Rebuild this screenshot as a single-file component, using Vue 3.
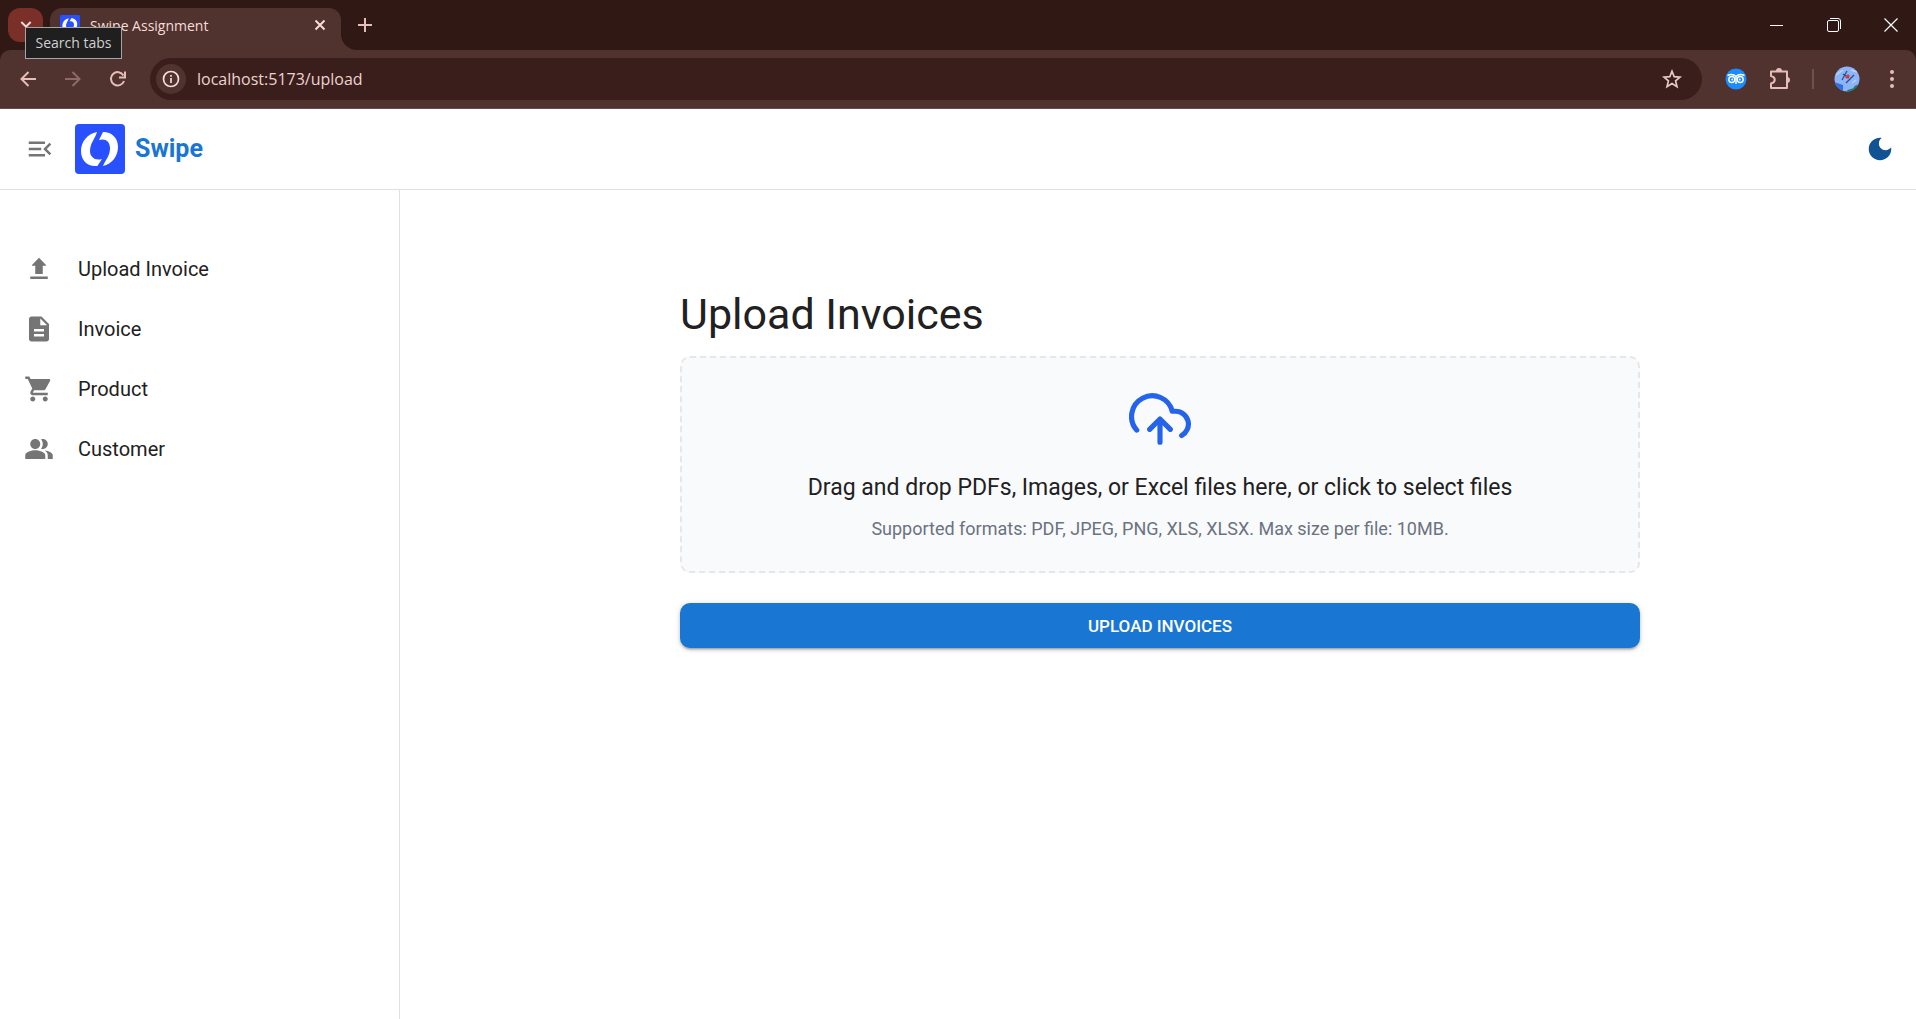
<script setup>
import { ref } from 'vue'

const address = ref('localhost:5173/upload')

const navItems = [
  { label: 'Upload Invoice', path: 'M5 20h14v-2H5zM12 3 6.4 8.8v.6H9V16h6V9.400h2.600v-.6z' },
  { label: 'Invoice', path: 'M14 2H6c-1.100 0-2 .9-2 2v16c0 1.100.9 2 2 2h12c1.100 0 2-.9 2-2V8zm2 16H8v-2h8zm0-4H8v-2h8zm-3-5V3.500L18.500 9z' },
  { label: 'Product', path: 'M7 18c-1.100 0-1.990.9-1.990 2S5.900 22 7 22s2-.9 2-2-.9-2-2-2M1 2v2h2l3.600 7.590-1.350 2.450c-.16.28-.25.61-.25.96 0 1.100.9 2 2 2h12v-2H7.420c-.14 0-.25-.11-.25-.25l.03-.12.9-1.630h7.450c.75 0 1.410-.41 1.750-1.030l3.580-6.490c.08-.14.12-.31.12-.48 0-.55-.45-1-1-1H5.210l-.94-2zm16 16c-1.100 0-1.990.9-1.990 2s.89 2 1.990 2 2-.9 2-2-.9-2-2-2' },
  { label: 'Customer', path: 'M16.670 13.130C18.040 14.060 19 15.320 19 17v3h4v-3c0-2.180-3.570-3.470-6.330-3.870M15 12c2.210 0 4-1.790 4-4s-1.790-4-4-4c-.47 0-.91.1-1.330.24C14.500 5.270 15 6.580 15 8s-.5 2.730-1.330 3.760c.42.14.86.24 1.330.24M9 12c2.210 0 4-1.790 4-4s-1.790-4-4-4-4 1.790-4 4 1.790 4 4 4m0 1c-2.670 0-8 1.340-8 4v3h16v-3c0-2.660-5.330-4-8-4' },
]
</script>

<template>
  <div class="window">
    <header class="chrome">
      <div class="tabstrip">
        <div class="search-wrap">
          <button class="tab-search" aria-label="Search tabs">
            <svg width="12" height="12" viewBox="0 0 12 12"><path d="M1.300 3l4.700 4.700L10.700 3" fill="none" stroke="#f6dcd8" stroke-width="2" /></svg>
          </button>
          <span class="tooltip" role="tooltip">Search tabs</span>
        </div>
        <div class="tab">
          <svg class="favicon" width="20" height="20" viewBox="0 0 50 50">
            <rect width="50" height="50" rx="3" fill="#2950ff" />
            <path fill="#fff" d="M22 8C12 10 6 18 6 27c0 9 6 15 14 15 2 0 3 0 3-1l4-6c-7 2-12-2-12-8 0-8 5-12 7-19zM28 8c9 0 15 6 15 15 0 9-6 17-15 19 3-7 7-10 7-18 0-7-5-10-11-8z" />
          </svg>
          <span class="tab-title">Swipe Assignment</span>
          <button class="plain" aria-label="Close tab">
            <svg width="12" height="12" viewBox="0 0 12 12"><path d="M1.500 1.500l9 9M10.500 1.500l-9 9" stroke="#f6dcd8" stroke-width="2" /></svg>
          </button>
          <svg class="tab-foot" width="16" height="16" viewBox="0 0 16 16"><path d="M0 0v16h16A16 16 0 0 1 0 0z" fill="#50322f" /></svg>
        </div>
        <button class="plain new-tab" aria-label="New tab">
          <svg width="14" height="14" viewBox="0 0 14 14"><path d="M7 0v14M0 7h14" stroke="#e7bdb7" stroke-width="2" /></svg>
        </button>
        <div class="window-controls">
          <button class="plain" aria-label="Minimize"><svg width="14" height="14" viewBox="0 0 14 14"><path d="M0 7.500h13" stroke="#fff" /></svg></button>
          <button class="plain" aria-label="Restore">
            <svg width="14" height="14" viewBox="0 0 14 14" fill="none" stroke="#fff"><rect x=".5" y="2.500" width="11" height="11" rx="1.500" /><path d="M3 .5h8a2.500 2.500 0 0 1 2.500 2.500v8" /></svg>
          </button>
          <button class="plain" aria-label="Close"><svg width="14" height="14" viewBox="0 0 14 14"><path d="M.5.5l13 13M13.500.5l-13 13" stroke="#fff" stroke-width="1.200" /></svg></button>
        </div>
      </div>
      <div class="toolbar">
        <div class="history">
          <button class="plain" aria-label="Back"><svg width="16" height="16" viewBox="0 0 16 16"><path d="M16 8H2M8.500 1 1.500 8l7 7" fill="none" stroke="#e7bdb7" stroke-width="2" /></svg></button>
          <button class="plain" aria-label="Forward"><svg width="16" height="16" viewBox="0 0 16 16"><path d="M0 8h14M7.500 1l7 7-7 7" fill="none" stroke="#8d6a66" stroke-width="2" /></svg></button>
          <button class="plain" aria-label="Reload"><svg width="16" height="16" viewBox="0 0 16 16"><path d="M14 10A6.700 6.700 0 1 1 13.500 4.500M15 .5V6.500H9" fill="none" stroke="#e7bdb7" stroke-width="2" /></svg></button>
        </div>
        <div class="omnibox">
          <button class="site-info" aria-label="Site information">
            <svg width="18" height="18" viewBox="0 0 18 18"><circle cx="9" cy="9" r="7.500" fill="none" stroke="#f6dcd8" stroke-width="1.700" /><path d="M9 8v5M9 5v1.700" stroke="#f6dcd8" stroke-width="1.700" /></svg>
          </button>
          <input v-model="address" class="address" type="text" aria-label="Address" />
          <button class="plain" aria-label="Bookmark">
            <svg width="20" height="20" viewBox="0 0 20 20"><path d="M10 2.200l2.200 5.500 5.900.4-4.500 3.800 1.400 5.700-5-3.100-5 3.100 1.400-5.700L1.900 8.100l5.900-.4z" fill="none" stroke="#e6ccc8" stroke-width="1.700" /></svg>
          </button>
        </div>
        <div class="extensions">
          <button class="plain extension" aria-label="Owl extension">
            <svg width="22" height="22" viewBox="0 0 22 22">
              <circle cx="11" cy="11" r="10.500" fill="#1a8cff" />
              <g fill="none" stroke="#fff" stroke-width="1.400"><circle cx="6.800" cy="11.500" r="3" /><circle cx="15.200" cy="11.500" r="3" /><path d="M2.500 7.500c3.500-1.500 6.500-1 8.500 1 2-2 5-2.500 8.500-1M11 8.500v7.500" /></g>
              <circle cx="7.200" cy="11.500" r="1" fill="#fff" /><circle cx="14.800" cy="11.500" r="1" fill="#fff" />
            </svg>
          </button>
          <button class="plain extension" aria-label="Extensions">
            <svg width="22" height="22" viewBox="0 0 22 22"><path d="M2 3.500h16v16.500H2v-4.500c5-1 5-6.500 0-7.500z" fill="none" stroke="#e7bdb7" stroke-width="2" stroke-linejoin="round" /><path d="M7 3a3 3 0 0 1 6 0zM18 9a3 3 0 0 1 0 6z" fill="#e7bdb7" /></svg>
          </button>
          <span class="divider"></span>
          <button class="plain" aria-label="Profile">
            <svg width="26" height="26" viewBox="0 0 26 26">
              <defs><clipPath id="avatar"><circle cx="13" cy="13" r="12.500" /></clipPath></defs>
              <g clip-path="url(#avatar)">
                <rect width="26" height="26" fill="#8db4f8" />
                <path d="M0 16l9 3v8H0z" fill="#2f6fe0" /><path d="M12 26c2-4 7-2 8-5 1-2 3-2 6-3v8z" fill="#14806f" />
                <path d="M2 9l7-5M17 4l6 2M18 17l4-3" stroke="#b9d2fb" stroke-width="1.500" />
                <path d="M8 14l5-9M12 17l8-8M9 8l6 4" stroke="#2b4a7d" stroke-width="1.200" />
                <path d="M11 11l3-3 2 2-3 3" fill="#d63a36" />
              </g>
            </svg>
          </button>
          <button class="plain menu" aria-label="Menu"><svg width="6" height="18" viewBox="0 0 6 18" fill="#e7bdb7"><circle cx="3" cy="2" r="2" /><circle cx="3" cy="9" r="2" /><circle cx="3" cy="16" r="2" /></svg></button>
        </div>
      </div>
    </header>

    <div class="appbar">
      <button class="plain" aria-label="Collapse menu">
        <svg width="30" height="30" viewBox="0 0 24 24" fill="#757575"><path d="M3 18h13v-2H3zM3 13h10v-2H3zM3 6v2h13V6zm18 9.590L17.420 12 21 8.410 19.590 7l-5 5 5 5z" /></svg>
      </button>
      <svg class="logo" width="50" height="50" viewBox="0 0 50 50">
        <rect width="50" height="50" rx="4" fill="#2950ff" />
        <path fill="#fff" d="M22 8C12 10 6 18 6 27c0 9 6 15 14 15 2 0 3 0 3-1l4-6c-7 2-12-2-12-8 0-8 5-12 7-19zM28 8c9 0 15 6 15 15 0 9-6 17-15 19 3-7 7-10 7-18 0-7-5-10-11-8z" />
      </svg>
      <span class="brand">Swipe</span>
      <button class="plain theme" aria-label="Dark mode">
        <svg width="30" height="30" viewBox="0 0 24 24" fill="#115293"><path d="M12 3c-4.970 0-9 4.030-9 9s4.030 9 9 9 9-4.030 9-9c0-.46-.04-.92-.1-1.360-.98 1.370-2.580 2.260-4.400 2.260-2.980 0-5.400-2.420-5.400-5.400 0-1.810.89-3.420 2.260-4.400-.44-.06-.9-.1-1.360-.1" /></svg>
      </button>
    </div>

    <div class="body">
      <nav class="sidebar">
        <a v-for="item in navItems" :key="item.label" href="#" class="nav-item">
          <svg width="30" height="30" viewBox="0 0 24 24" fill="#757575"><path :d="item.path" /></svg>
          <span>{{ item.label }}</span>
        </a>
      </nav>
      <main class="content">
        <section class="uploader">
          <h1>Upload Invoices</h1>
          <label class="dropzone">
            <input class="file" type="file" multiple accept=".pdf,.jpeg,.png,.xls,.xlsx" />
            <svg width="62" height="62" viewBox="0 0 24 24" fill="none" stroke="#2563eb" stroke-width="2" stroke-linecap="round" stroke-linejoin="round"><path d="M16 16l-4-4-4 4M12 12v9M20.390 18.390A5 5 0 0 0 18 9h-1.260A8 8 0 1 0 3 16.300" /></svg>
            <span class="drop-title">Drag and drop PDFs, Images, or Excel files here, or click to select files</span>
            <span class="drop-hint">Supported formats: PDF, JPEG, PNG, XLS, XLSX. Max size per file: 10MB.</span>
          </label>
          <button class="submit">UPLOAD INVOICES</button>
        </section>
      </main>
    </div>
  </div>
</template>

<style>
body { margin: 0; background: #fff; }
</style>

<style scoped>
.window { display: flex; flex-direction: column; min-height: 100vh; font-family: Roboto, "Liberation Sans", sans-serif; color: #212121; }
.window * { box-sizing: border-box; }
svg { display: block; flex: none; }
.plain { display: flex; align-items: center; justify-content: center; padding: 0; border: 0; background: none; cursor: pointer; }

.chrome { font-family: "Open Sans", "Noto Sans", sans-serif; background: #301814; }
.tabstrip { display: flex; align-items: flex-start; height: 50px; padding: 8px 0 0 8px; }
.search-wrap { position: relative; }
.tab-search { display: flex; align-items: center; justify-content: center; width: 35px; height: 34px; padding: 0; border: 0; border-radius: 12px; background: #7a2f28; }
.tooltip { position: absolute; z-index: 2; left: 17px; top: 19px; width: 97px; height: 32px; border: 1px solid #a5a5a5; background: #1f1f1f; color: #d0d0d0; font-size: 14px; line-height: 30px; text-align: center; white-space: nowrap; }
.tab { position: relative; display: flex; align-items: center; gap: 10px; width: 291px; height: 42px; margin-left: 7px; padding: 0 15px 8px 10px; border-radius: 12px 12px 0 0; background: #50322f; color: #f6dcd8; font-size: 14px; }
.tab-title { flex: 1; }
.tab-foot { position: absolute; left: 100%; bottom: 0; }
.new-tab { width: 48px; height: 34px; }
.window-controls { display: flex; gap: 43px; margin-left: auto; padding: 10px 18px 0 0; }

.toolbar { display: flex; align-items: center; height: 59px; border-bottom: 1px solid #664b49; border-radius: 10px 10px 0 0; background: #50322f; padding: 0 21px 0 20px; }
.history { display: flex; gap: 29px; width: 130px; }
.omnibox { display: flex; flex: 1; align-items: center; height: 42px; padding: 0 20px 0 6px; border-radius: 21px; background: #3a1e1b; }
.site-info { display: flex; align-items: center; justify-content: center; width: 30px; height: 30px; padding: 0; border: 0; border-radius: 50%; background: #50322f; }
.address { flex: 1; min-width: 0; margin-left: 11px; padding: 0; border: 0; outline: 0; background: none; color: #ecd3cf; font: 16px "Open Sans", "Noto Sans", sans-serif; }
.extensions { display: flex; align-items: center; gap: 20px; padding-left: 22px; }
.extension { width: 24px; }
.menu { margin-left: 9px; }
.divider { width: 2px; height: 20px; background: #734f4b; }

.appbar { display: flex; align-items: center; height: 81px; padding: 0 21px 0 25px; border-bottom: 1px solid #e0e0e0; }
.logo { margin: 0 10px 0 20px; }
.brand { color: #1976d2; font-size: 25px; font-weight: 700; line-height: 40px; }
.theme { margin-left: auto; }

.body { display: flex; flex: 1; }
.sidebar { width: 400px; padding: 49px 0; border-right: 1px solid #e0e0e0; }
.nav-item { display: flex; align-items: center; gap: 24px; height: 60px; padding: 0 24px; color: #212121; font-size: 20px; line-height: 30px; text-decoration: none; }
.content { flex: 1; padding: 98px 24px 40px 28px; }
.uploader { display: flex; flex-direction: column; max-width: 960px; margin: 0 auto; }
h1 { margin: 0 0 16px; font-size: 43px; font-weight: 400; line-height: 52px; }
.dropzone { position: relative; display: flex; flex-direction: column; align-items: center; height: 217px; padding-top: 30px; border: 2px dashed #e5e7eb; border-radius: 10px; background: #f9fafc; cursor: pointer; }
.file { position: absolute; width: 1px; height: 1px; opacity: 0; }
.drop-title { margin-top: 18px; font-size: 23px; line-height: 40px; }
.drop-hint { margin-top: 8px; color: #6b7280; font-size: 18px; line-height: 26px; }
.submit { height: 45px; margin-top: 30px; padding: 0; border: 0; border-radius: 10px; background: #1976d2; color: #fff; font: 500 17px/30px Roboto, "Liberation Sans", sans-serif; box-shadow: 0 3px 2px -2px rgba(0,0,0,.2), 0 2px 3px rgba(0,0,0,.16), 0 1px 6px rgba(0,0,0,.14); cursor: pointer; }
</style>
